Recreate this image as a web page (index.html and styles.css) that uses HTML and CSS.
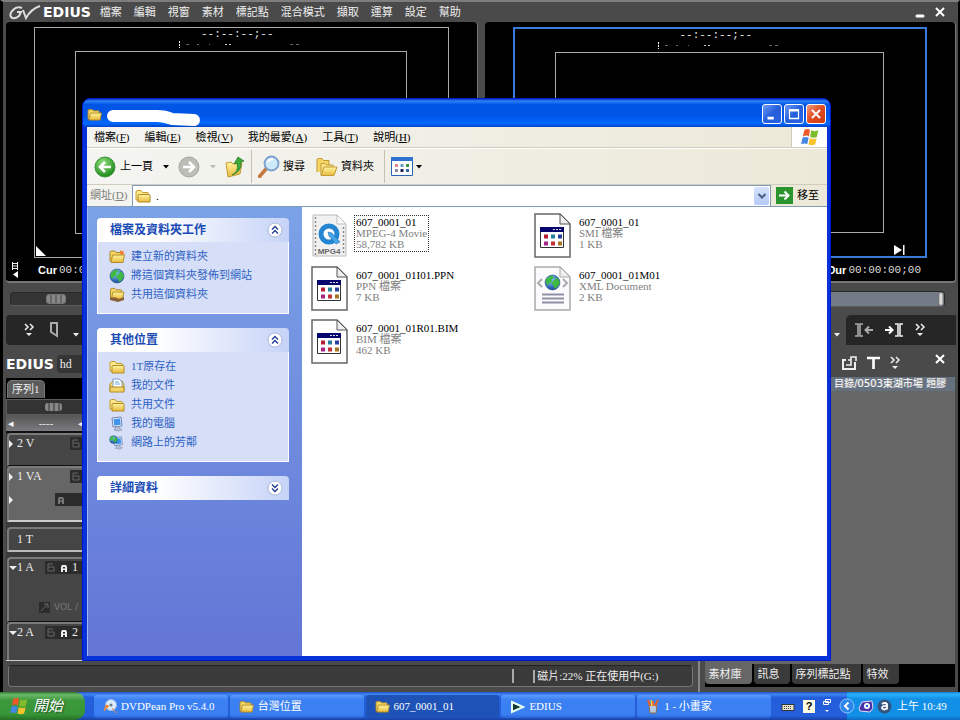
FILE: index.html
```
<!DOCTYPE html>
<html lang="zh-Hant">
<head>
    <meta charset="utf-8">
    <title>EDIUS</title>
    <link rel="stylesheet" href="styles.css">
</head>
<body>
    <svg class="sprite" width="0" height="0" aria-hidden="true">
        <defs>
            <linearGradient id="gold" x1="0" y1="0" x2="0" y2="1">
                <stop offset="0" stop-color="#fff4a0"/>
                <stop offset="1" stop-color="#e9b93a"/>
            </linearGradient>
            <radialGradient id="green" cx="0.4" cy="0.3" r="0.7">
                <stop offset="0" stop-color="#8fe07c"/>
                <stop offset="1" stop-color="#1f8a1c"/>
            </radialGradient>
            <radialGradient id="earth" cx="0.4" cy="0.3" r="0.7">
                <stop offset="0" stop-color="#8fd0f5"/>
                <stop offset="1" stop-color="#1448a0"/>
            </radialGradient>
        </defs>
        <symbol id="folder" viewBox="0 0 16 14">
            <path d="M1 12V3q0-1.500 1.500-1.500h3L7 3h5q1 0 1 1v2" fill="#f5d663" stroke="#a8832a"/>
            <path d="M2 13 3.500 5.500h12L14 13z" fill="url(#gold)" stroke="#b08a25"/>
        </symbol>
        <symbol id="folder-side" viewBox="0 0 16 14">
            <path d="M1 11V3q0-1.500 1.500-1.500h3.500l1.500 2H12q1.500 0 1.500 1.500v6z" fill="#ffe98a" stroke="#c39b33"/>
            <path d="M3 13V6.500q0-1 1-1h10q1 0 1 1V13z" fill="url(#gold)" stroke="#b08a25"/>
        </symbol>
        <symbol id="globe" viewBox="0 0 16 16">
            <circle cx="8" cy="8" r="7" fill="url(#earth)" stroke="#27508b" stroke-width="0.600"/>
            <path d="M2 5q2-3 6-3.500l1 2-2 2 .5 2-3 1.500-1.500 2Q.8 8 2 5zM10 3l3.500 1.500L15 8l-2 4-3 2-1-3-2-2 2-3 2-.5z" fill="#3fb944"/>
        </symbol>
        <symbol id="monitor" viewBox="0 0 16 16">
            <path d="M3 2l9-1 1 9-9 1z" fill="#e8eefb" stroke="#7486b5"/>
            <path d="M4.500 3.200l6.500-.7.700 6.300-6.500.7z" fill="#3f95ec"/>
            <path d="M6 11l4-.5.5 2 2.500 1-3 1.500-5-1 1.500-1z" fill="#b9c2d8" stroke="#7a84a0" stroke-width="0.600"/>
        </symbol>
        <symbol id="flag" viewBox="0 0 18 16">
            <path d="M4 1.500q3-1.500 5 0L8 7.500q-2-1.500-5.500 0z" fill="#ec5a2a"/>
            <path d="M10 2q3 1.500 6.500 0l-1.400 6q-3 1.300-6-.2z" fill="#80bd2c"/>
            <path d="M2.300 8.500q3-1.300 5.500.2l-1.300 5.800q-2.500-1.500-5.500 0z" fill="#4486e4"/>
            <path d="M8.800 9q3 1.500 6.200.2l-1.400 5.600q-3 1.400-6 0z" fill="#fac22d"/>
        </symbol>
        <symbol id="chevrons" viewBox="0 0 12 16">
            <path d="M2 2l3 3-3 3M7 2l3 3-3 3" fill="none" stroke="#eee" stroke-width="1.500"/>
            <path d="M3 11h6l-3 3z" fill="#eee"/>
        </symbol>
        <symbol id="caret" viewBox="0 0 6 4"><path d="M0 0h6L3 3.500z" fill="currentColor"/></symbol>
        <symbol id="lock" viewBox="0 0 9 9">
            <path d="M1 4h6v4H1zM1 4V1h5" fill="none" stroke="#666"/>
        </symbol>
        <symbol id="speaker" viewBox="0 0 8 8">
            <path d="M1 8V3l1-2h4l1 2v5H5V6H3v2zM3 3v1.500h2V3z" fill="currentColor" fill-rule="evenodd"/>
        </symbol>
        <symbol id="toggle-up" viewBox="0 0 18 18">
            <circle cx="9" cy="9" r="7" fill="#fff" stroke="#a9b5da"/>
            <path d="M6 8.500 9 5.500l3 3M6 12.500 9 9.500l3 3" fill="none" stroke="#223c94" stroke-width="1.400"/>
        </symbol>
        <symbol id="toggle-down" viewBox="0 0 18 18">
            <circle cx="9" cy="9" r="7" fill="#fff" stroke="#a9b5da"/>
            <path d="M6 5.500l3 3 3-3M6 9.500l3 3 3-3" fill="none" stroke="#223c94" stroke-width="1.400"/>
        </symbol>
        <symbol id="dots" viewBox="0 0 124 8">
            <path d="M1.500 1v7" stroke="#fff" stroke-dasharray="2 1"/>
            <path d="M8 4.500h3M19 4.500h2M31 4.500h1M112 4.500h3M118 4.500h3" stroke="#666"/>
            <path d="M47 4.500h2M51 4.500h2" stroke="#ccc"/>
        </symbol>
        <symbol id="file-app" viewBox="0 0 37 45">
            <path d="M1 1h25l10 10v33H1z" fill="#fff" stroke="#666" stroke-width="1.500"/>
            <path d="M26 1v10h10z" fill="#eee" stroke="#555"/>
            <path d="M6.500 14.500h23v20h-23z" fill="#fff" stroke="#333"/>
            <path d="M6 14h24v5H6z" fill="#06066e"/>
            <path d="M19 16.500h2M22 16.500h2M25 16.500h2" stroke="#ddd"/>
            <path d="M10 21.500h4v4h-4z" fill="#b52036"/>
            <path d="M17 21.500h4v4h-4z" fill="#267f9e"/>
            <path d="M24 21.500h4v4h-4z" fill="#28419e"/>
            <path d="M10 28.500h4v4h-4z" fill="#a42588"/>
            <path d="M17 28.500h4v4h-4z" fill="#c33038"/>
            <path d="M24 28.500h4v4h-4z" fill="#a47420"/>
        </symbol>
    </svg>

    <main class="edius">
        <header class="edius-bar">
            <svg class="gv-logo" viewBox="0 0 32 15">
                <path d="M13 3Q8 1 4 5t-2 7q3 3 8-1l2-4H8" fill="none" stroke="#ddd" stroke-width="2"/>
                <path d="M14 5l3 8Q22 4 31 1" fill="none" stroke="#ddd" stroke-width="2"/>
            </svg>
            <span class="brand">EDIUS</span>
            <nav class="edius-menu">
                <a href="#">檔案</a><a href="#">編輯</a><a href="#">視窗</a><a href="#">素材</a><a href="#">標記點</a><a href="#">混合模式</a><a href="#">擷取</a><a href="#">運算</a><a href="#">設定</a><a href="#">幫助</a>
            </nav>
            <div class="edius-controls">
                <button aria-label="最小化"><svg viewBox="0 0 12 12" width="12" height="12"><path d="M3 10h6" stroke="#fff" stroke-width="3" stroke-linecap="round"/></svg></button>
                <button aria-label="關閉"><svg viewBox="0 0 12 12" width="12" height="12"><path d="M2 2l8 8M10 2l-8 8" stroke="#fff" stroke-width="2"/></svg></button>
            </div>
        </header>

        <section class="monitors">
            <div class="monitor">
                <div class="frame">
                    <div class="frame-info"><span>--:--:--;--</span><svg width="124" height="8"><use href="#dots"/></svg></div>
                    <div class="safe-area"></div>
                    <div class="frame-marks"><svg width="10" height="10" viewBox="0 0 10 10"><path d="M0 0l10 10H0z" fill="#fff"/></svg></div>
                </div>
                <div class="timecodes">
                    <svg width="10" height="18" viewBox="0 0 10 18"><path d="M2.500 1v8M7.500 1v8M2 2.500h6M2 5h6M2 7.500h6" stroke="#eee"/><path d="M8 10v7l-5-3.500z" fill="#fff"/></svg>
                    <b>Cur</b><span>00:00:00;00</span>
                </div>
            </div>
            <div class="monitor">
                <div class="frame frame-active">
                    <div class="frame-info"><span>--:--:--;--</span><svg width="124" height="8"><use href="#dots"/></svg></div>
                    <div class="safe-area"></div>
                    <div class="frame-marks marks-end"><svg width="11" height="10" viewBox="0 0 11 10"><path d="M0 0l8 5-8 5zM9 0h1.500v10H9z" fill="#fff"/></svg></div>
                </div>
                <div class="timecodes timecodes-end"><b>Dur</b><span>00:00:00;00</span></div>
            </div>
        </section>

        <section class="scrubbers">
            <div><input type="range" aria-label="播放位置" value="8"></div>
            <div><input type="range" class="scrub-full" aria-label="錄製位置" value="100"></div>
        </section>

        <section class="transport">
            <div class="transport-group">
                <button aria-label="更多"><svg width="12" height="16"><use href="#chevrons"/></svg></button>
                <button aria-label="標記"><svg width="10" height="16" viewBox="0 0 10 16"><path d="M2 1h6v13l-6-4z" fill="none" stroke="#aaa" stroke-width="2"/></svg></button>
                <button class="low" aria-label="選項"><svg width="6" height="4"><use href="#caret"/></svg></button>
            </div>
            <div class="transport-group transport-end">
                <button class="low" aria-label="選項"><svg width="6" height="4"><use href="#caret"/></svg></button>
                <div class="transport-dark">
                    <button aria-label="入點"><svg width="20" height="16" viewBox="0 0 20 16"><path d="M1 2h3v12H1M9 2H6v12h3" fill="none" stroke="#aaa" stroke-width="1.600"/><path d="M19 8h-7M15 4.500 11.500 8l3.500 3.500" fill="none" stroke="#aaa" stroke-width="2"/></svg></button>
                    <button aria-label="出點"><svg width="20" height="16" viewBox="0 0 20 16"><path d="M11 2h3v12h-3M19 2h-3v12h3" fill="none" stroke="#eee" stroke-width="1.600"/><path d="M1 8h7M5 4.500 8.500 8 5 11.500" fill="none" stroke="#fff" stroke-width="2"/></svg></button>
                    <button aria-label="更多"><svg width="12" height="16"><use href="#chevrons"/></svg></button>
                </div>
            </div>
        </section>

        <section class="lower">
            <div class="timeline">
                <header class="timeline-bar"><span class="brand">EDIUS</span><span class="project">hd</span></header>
                <div class="sequence-tabs"><button>序列1</button></div>
                <div class="ruler"><span class="thumb"></span></div>
                <div class="scale"><span>◂</span><span>----</span><span>◂</span></div>
                <div class="tracks">
                    <div class="track track-v"><i class="arrow-right"></i><span>2 V</span><span class="badge"><svg width="9" height="9"><use href="#lock"/></svg></span></div>
                    <div class="track track-va">
                        <i class="arrow-right"></i><span>1 VA</span><span class="badge"><svg width="9" height="9"><use href="#lock"/></svg></span>
                        <i class="arrow-right"></i><span class="badge badge-audio"><svg width="8" height="8"><use href="#speaker"/></svg></span>
                    </div>
                    <div class="track track-t"><i></i><span>1 T</span></div>
                    <div class="track track-a">
                        <i class="arrow-down"></i><span>1 A</span><span class="badge"><svg width="9" height="9"><use href="#lock"/></svg><svg width="8" height="8"><use href="#speaker"/></svg><b>1</b></span>
                        <span class="volume"><svg width="11" height="11" viewBox="0 0 11 11"><path d="M0 0h11v11H0z" fill="#2c2c2c"/><path d="M2 9l7-7M5 2h4v4" stroke="#666" fill="none"/></svg>VOL /</span>
                    </div>
                    <div class="track track-a2"><i class="arrow-down"></i><span>2 A</span><span class="badge"><svg width="9" height="9"><use href="#lock"/></svg><svg width="8" height="8"><use href="#speaker"/></svg><b>2</b></span></div>
                </div>
                <footer class="status"><span class="status-mark"></span><span class="status-text">磁片:22% 正在使用中(G:)</span></footer>
            </div>

            <div class="bin">
                <header class="bin-bar">
                    <button aria-label="加入素材"><svg width="17" height="16" viewBox="0 0 17 16"><path d="M5 5H2v9h12V7" fill="none" stroke="#eee" stroke-width="2"/><path d="M5 10h5V5M7 5h3V2h5v4" fill="none" stroke="#eee" stroke-width="1.600"/></svg></button>
                    <button aria-label="字幕"><svg width="13" height="14" viewBox="0 0 13 14"><path d="M0 2h13M6.500 2v11" stroke="#fff" stroke-width="2.600"/></svg></button>
                    <button aria-label="更多"><svg width="12" height="16"><use href="#chevrons"/></svg></button>
                    <button class="bin-close" aria-label="關閉"><svg viewBox="0 0 12 12" width="12" height="12"><path d="M2 2l8 8M10 2l-8 8" stroke="#fff" stroke-width="2"/></svg></button>
                </header>
                <div class="bin-path">目錄/0503東湖市場 題膠</div>
                <div class="bin-body"></div>
                <nav class="bin-tabs"><button class="active">素材庫</button><button>訊息</button><button>序列標記點</button><button>特效</button></nav>
            </div>
        </section>
    </main>

    <section class="explorer">
        <header class="title-bar">
            <svg width="15" height="13"><use href="#folder"/></svg>
            <svg class="scribble" width="96" height="18" viewBox="0 0 96 18"><path d="M8 7h44q8 0 15 3l22 1" fill="none" stroke="#fff" stroke-width="12" stroke-linecap="round" stroke-linejoin="round"/></svg>
            <div class="window-controls">
                <button aria-label="最小化"><svg viewBox="0 0 20 20"><path d="M5 14.500h7" stroke="#fff" stroke-width="3"/></svg></button>
                <button aria-label="最大化"><svg viewBox="0 0 20 20"><path d="M5 5.500h10V15H5z" fill="none" stroke="#fff" stroke-width="1.400"/><path d="M4.500 6h11" stroke="#fff" stroke-width="2.400"/></svg></button>
                <button class="close" aria-label="關閉"><svg viewBox="0 0 20 20"><path d="M5.500 5.500l9 9M14.500 5.500l-9 9" stroke="#fff" stroke-width="2.200"/></svg></button>
            </div>
        </header>
        <nav class="menu-bar">
            <a href="#">檔案(<u>F</u>)</a><a href="#">編輯(<u>E</u>)</a><a href="#">檢視(<u>V</u>)</a><a href="#">我的最愛(<u>A</u>)</a><a href="#">工具(<u>T</u>)</a><a href="#">說明(<u>H</u>)</a>
            <span class="flag-box"><svg width="20" height="18"><use href="#flag"/></svg></span>
        </nav>
        <div class="tool-bar">
            <button class="tool-back"><svg width="22" height="22" viewBox="0 0 22 22"><circle cx="11" cy="11" r="10" fill="url(#green)" stroke="#3a9436"/><path d="M17 11H7M11 6l-5 5 5 5" fill="none" stroke="#fff" stroke-width="2.600"/></svg>上一頁</button>
            <button class="tool-caret" aria-label="上一頁清單"><svg width="6" height="4"><use href="#caret"/></svg></button>
            <button aria-label="下一頁"><svg width="22" height="22" viewBox="0 0 22 22"><circle cx="11" cy="11" r="10" fill="#bdbdb8" stroke="#a5a5a0"/><path d="M5 11h10M11 6l5 5-5 5" fill="none" stroke="#fff" stroke-width="2.600"/></svg></button>
            <button class="tool-caret faded" aria-label="下一頁清單"><svg width="6" height="4"><use href="#caret"/></svg></button>
            <button aria-label="上一層"><svg width="20" height="22" viewBox="0 0 20 22"><path d="M1 7l5-1 2 2 9-1-2 11-12 3z" fill="url(#gold)" stroke="#c19a34"/><path d="M7 19q7-3 5-12l-3 1 4-7 6 4-3 1q1 10-9 13z" fill="#3fa83b" stroke="#237523" stroke-width="0.700"/></svg></button>
            <span class="divider"></span>
            <button><svg width="22" height="23" viewBox="0 0 22 23"><path d="M1.500 21.500 8 14" stroke="#c8793f" stroke-width="3.500" stroke-linecap="round"/><circle cx="13.500" cy="8.500" r="7" fill="#cdeafb" stroke="#7d9fcf" stroke-width="1.800"/><path d="M10 7q1-3 5-3" fill="none" stroke="#fff" stroke-width="2"/></svg>搜尋</button>
            <button class="tool-folders"><svg width="22" height="20" viewBox="0 0 22 20"><path d="M1 15V3q0-1.500 1.500-1.500H6l1.500 2H13v10" fill="#f5d663" stroke="#c19a34"/><path d="M5 18V6.500h4L10.500 8H17v3" fill="#fbe387" stroke="#c19a34"/><path d="M5 18.500 8 10h13l-3 8.500z" fill="url(#gold)" stroke="#c19a34"/></svg>資料夾</button>
            <span class="divider"></span>
            <button class="tool-view" aria-label="檢視"><svg width="22" height="19" viewBox="0 0 22 19"><path d="M.5.5h21v18H.5z" fill="#fff" stroke="#2a64b5"/><path d="M0 0h22v4H0z" fill="#2f71d0"/><path d="M4 7h3v3H4z" fill="#d88"/><path d="M9.500 7h3v3h-3z" fill="#69c"/><path d="M15 7h3v3h-3z" fill="#3a953a"/><path d="M4 12h3v3H4z" fill="#88a"/><path d="M9.500 12h3v3h-3z" fill="#225"/><path d="M15 12h3v3h-3z" fill="#36a"/></svg><svg width="6" height="4"><use href="#caret"/></svg></button>
        </div>
        <form class="address-bar">
            <label for="address">網址(<u>D</u>)</label>
            <div class="address-box">
                <svg width="16" height="14"><use href="#folder-side"/></svg>
                <input type="text" id="address" value=".">
                <button type="button" aria-label="網址清單"><svg width="10" height="7" viewBox="0 0 10 7"><path d="M1.500 1 5 4.500 8.500 1" fill="none" stroke="#4d6185" stroke-width="2.200"/></svg></button>
            </div>
            <button type="button" class="go"><svg width="17" height="17" viewBox="0 0 17 17"><path d="M0 0h17v17H0z" fill="#2c942c"/><path d="M3 8.500h9M8.500 4.500l4 4-4 4" fill="none" stroke="#fff" stroke-width="2"/></svg>移至</button>
        </form>

        <div class="explorer-body">
            <aside class="sidebar">
                <section class="panel">
                    <h2>檔案及資料夾工作<button aria-label="收合"><svg width="18" height="18"><use href="#toggle-up"/></svg></button></h2>
                    <ul>
                        <li><svg width="16" height="15" viewBox="0 0 16 14"><use href="#folder" width="16" height="14"/><path d="M11 0l1 2 3-1-1 2 2 1-3 1-2-1z" fill="#f47a2a"/></svg><a href="#">建立新的資料夾</a></li>
                        <li><svg width="16" height="16"><use href="#globe"/></svg><a href="#">將這個資料夾發佈到網站</a></li>
                        <li><svg width="16" height="15" viewBox="0 0 16 15"><use href="#folder" width="16" height="13"/><path d="M1 11q5-2 9 1l5-2v3l-6 2-8-2z" fill="#8a6038"/></svg><a href="#">共用這個資料夾</a></li>
                    </ul>
                </section>
                <section class="panel">
                    <h2>其他位置<button aria-label="收合"><svg width="18" height="18"><use href="#toggle-up"/></svg></button></h2>
                    <ul>
                        <li><svg width="16" height="14"><use href="#folder-side"/></svg><a href="#">1T原存在</a></li>
                        <li><svg width="16" height="15" viewBox="0 0 16 15"><path d="M1 13V6l3-3h9l2 4v6z" fill="url(#gold)" stroke="#b08a25"/><path d="M4 1h6l3 3v6H4z" fill="#fff" stroke="#7f9cc0"/><path d="M6 4h4M6 6h5" stroke="#6aa6d8"/><path d="M1 9h14v5H1z" fill="#f3d568" stroke="#b08a25"/></svg><a href="#">我的文件</a></li>
                        <li><svg width="16" height="14"><use href="#folder-side"/></svg><a href="#">共用文件</a></li>
                        <li><svg width="16" height="16"><use href="#monitor"/></svg><a href="#">我的電腦</a></li>
                        <li><svg width="16" height="16" viewBox="0 0 16 16"><use href="#monitor" x="2" width="14" height="16"/><use href="#globe" width="9" height="9"/></svg><a href="#">網路上的芳鄰</a></li>
                    </ul>
                </section>
                <section class="panel">
                    <h2>詳細資料<button aria-label="展開"><svg width="18" height="18"><use href="#toggle-down"/></svg></button></h2>
                </section>
            </aside>
            <div class="files">
                <div class="file">
                    <svg width="37" height="45" viewBox="0 0 37 45">
                        <path d="M2 2h24l9 9v32H2z" fill="#f1f1f1" stroke="#bbb"/>
                        <path d="M26 2v9h9z" fill="#fff" stroke="#bbb"/>
                        <path d="M4.500 4v38M32.500 14v28" stroke="#888" stroke-width="1.500" stroke-dasharray="2 2"/>
                        <circle cx="18" cy="21" r="8" fill="#fff" stroke="#2486d2" stroke-width="5"/>
                        <path d="M17 19l4 1 8 9-4 2-7-8z" fill="#45a5e8" stroke="#1b71b8" stroke-width="0.600"/>
                        <text x="18" y="41" text-anchor="middle" class="mpg-label">MPG4</text>
                    </svg>
                    <p class="selected"><strong>607_0001_01</strong>MPEG-4 Movie<br>58,782 KB</p>
                </div>
                <div class="file"><svg width="37" height="45"><use href="#file-app"/></svg><p><strong>607_0001_01</strong>SMI 檔案<br>1 KB</p></div>
                <div class="file"><svg width="37" height="45"><use href="#file-app"/></svg><p><strong>607_0001_01I01.PPN</strong>PPN 檔案<br>7 KB</p></div>
                <div class="file">
                    <svg width="37" height="45" viewBox="0 0 37 45">
                        <path d="M1 1h25l10 10v33H1z" fill="#fbfbfd" stroke="#aaa" stroke-width="1.500"/>
                        <path d="M26 1v10h10z" fill="#eee" stroke="#aaa"/>
                        <path d="M8 13l-4 4 4 4M29 13l4 4-4 4" fill="none" stroke="#aaa" stroke-width="2"/>
                        <use href="#globe" x="10" y="8" width="17" height="17"/>
                        <path d="M8 28.500h22M8 32.500h22M8 36.500h22" stroke="#8f8fa6" stroke-width="2"/>
                    </svg>
                    <p><strong>607_0001_01M01</strong>XML Document<br>2 KB</p>
                </div>
                <div class="file"><svg width="37" height="45"><use href="#file-app"/></svg><p><strong>607_0001_01R01.BIM</strong>BIM 檔案<br>462 KB</p></div>
            </div>
        </div>
    </section>

    <footer class="taskbar">
        <button class="start"><svg width="20" height="18"><use href="#flag"/></svg>開始</button>
        <div class="tasks">
            <button><svg width="14" height="15" viewBox="0 0 14 15"><circle cx="8" cy="6" r="5.500" fill="#dcecff" stroke="#9ab8e8"/><path d="M6 7 1 12l2-6zM9 9l4 5" fill="#f08a3c" stroke="#f08a3c"/><circle cx="8" cy="6" r="1.500" fill="#678"/></svg>DVDPean Pro v5.4.0</button>
            <button><svg width="15" height="13"><use href="#folder"/></svg>台灣位置</button>
            <button class="current"><svg width="15" height="13"><use href="#folder"/></svg>607_0001_01</button>
            <button><svg width="15" height="14" viewBox="0 0 15 14"><path d="M2 2l11 5-11 5z" fill="#123a34" stroke="#e6fff0" stroke-width="2"/></svg>EDIUS</button>
            <button><svg width="14" height="15" viewBox="0 0 14 15"><path d="M3 6h8l-1 8H4z" fill="#b8cbe0" stroke="#8c6b54"/><path d="M4 7 2 1M7 7V2M9 7l3-6" stroke="#e4622c" stroke-width="2"/><path d="M6 7 5 1" stroke="#f1d04c" stroke-width="1.500"/></svg>1 - 小畫家</button>
        </div>
        <div class="language-bar">
            <button aria-label="鍵盤"><svg width="14" height="14" viewBox="0 0 14 14"><path d="M1 5.500h12v6H1z" fill="#e8e4cc" stroke="#333"/><path d="M3 7.500h8M3 9.500h8" stroke="#444" stroke-dasharray="1 1"/></svg></button>
            <button class="help">?</button>
            <button aria-label="還原"><svg width="8" height="16" viewBox="0 0 8 16"><path d="M2.500 1.500h5v3h-5zM.5 3.500h5v3h-5z" fill="#2c61d8" stroke="#fff"/><path d="M2 12h4l-2 2z" fill="#fff"/></svg></button>
        </div>
        <div class="tray">
            <button class="tray-toggle" aria-label="顯示圖示"><svg width="16" height="16" viewBox="0 0 16 16"><circle cx="8" cy="8" r="7" fill="#2c85ea" stroke="#8cc6ff"/><path d="M9.500 4.500 6 8l3.500 3.500" fill="none" stroke="#fff" stroke-width="2"/></svg></button>
            <svg width="16" height="14" viewBox="0 0 16 14"><path d="M1 9 4 3l10-1 1 7-3 4-10-1z" fill="#4634a8" stroke="#e8d6f4"/><circle cx="9" cy="7" r="3" fill="#fff"/><circle cx="9" cy="7" r="1.300" fill="#36c"/></svg>
            <svg width="15" height="15" viewBox="0 0 15 15"><circle cx="7.500" cy="7.500" r="7" fill="#34557f"/><path d="M5 5q3-2 5 0v5.500M10 7q-5-.5-5 2 2 3 5 0" fill="none" stroke="#fff" stroke-width="1.800"/></svg>
            <time>上午 10:49</time>
        </div>
    </footer>
</body>
</html>
```
FILE: styles.css
```
* {
    box-sizing: border-box;
}
body {
    margin: 0;
    height: 100vh;
    display: flex;
    flex-direction: column;
    overflow: hidden;
    background: #000;
    color: #eee;
    font: 11px/13px "Liberation Serif", "Noto Sans CJK TC", serif;
}
button {
    display: flex;
    align-items: center;
    padding: 0;
    border: 0;
    background: none;
    color: inherit;
    font: inherit;
    white-space: nowrap;
}
a {
    color: inherit;
    text-decoration: none;
    white-space: nowrap;
}
svg {
    display: block;
    flex: none;
}
.sprite {
    position: absolute;
}

/* EDIUS */
.edius {
    flex: 1;
    min-height: 0;
    display: flex;
    flex-direction: column;
    padding: 0 2px 0 3px;
    background: #4a4a4a;
    border-top: 2px solid #7d7d7d;
    border-left: 3px solid #000;
    border-right: 2px solid #000;
}
.edius-bar {
    display: flex;
    align-items: center;
    height: 20px;
    flex: none;
    padding: 0 10px 0 3px;
}
.gv-logo {
    width: 32px;
    height: 15px;
}
.brand {
    font: bold 14px/18px "DejaVu Sans", sans-serif;
    color: #fff;
}
.edius-bar .brand {
    margin: 0 9px 0 2px;
}
.edius-menu {
    display: flex;
    gap: 12px;
}
.edius-controls {
    display: flex;
    gap: 8px;
    margin-left: auto;
}
.monitors {
    display: flex;
    gap: 7px;
    flex: 261;
    min-height: 0;
}
.monitor {
    flex: 1;
    display: flex;
    flex-direction: column;
    padding: 5px 28px 0 28px;
    background: #000;
    border-right: 1px solid #777;
    border-bottom: 2px solid #777;
    border-radius: 4px;
}
.frame {
    flex: 1;
    display: flex;
    flex-direction: column;
    border: 1px solid #aaa;
}
.frame-active {
    border: 2px solid #3a7ad8;
}
.frame-info {
    display: flex;
    flex-direction: column;
    align-items: center;
    height: 23px;
    padding-right: 8px;
    font: 11px/12px "Liberation Mono", monospace;
}
.frame-info svg {
    margin-left: 6px;
}
.safe-area {
    flex: 1;
    margin: 0 41px 0 40px;
    border: 1px solid #aaa;
}
.frame-marks {
    display: flex;
    align-items: flex-end;
    height: 23px;
    padding: 1px;
}
.marks-end {
    justify-content: flex-end;
    padding-right: 20px;
}
.timecodes {
    display: flex;
    align-items: center;
    height: 23px;
    margin-left: -24px;
    color: #ddd;
    font: 11px/14px "Liberation Mono", monospace;
}
.timecodes b {
    margin: 0 2px 0 18px;
    color: #fff;
    font: bold 11px/14px "Liberation Sans", sans-serif;
}
.timecodes-end {
    justify-content: flex-end;
    padding-right: 6px;
}
.scrubbers {
    display: flex;
    gap: 7px;
    height: 32px;
    flex: none;
}
.scrubbers div {
    flex: 1;
    display: flex;
    align-items: center;
    padding: 0 11px 0 4px;
}
.scrubbers input {
    appearance: none;
    width: 100%;
    height: 14px;
    margin: 0;
    background: #353535;
    border: 1px solid #2a2a2a;
    border-bottom-color: #5c5c5c;
    border-radius: 4px;
}
.scrubbers input::-webkit-slider-thumb {
    appearance: none;
    width: 20px;
    height: 10px;
    border-radius: 3px;
    border: 1px solid #777;
    background: repeating-linear-gradient(90deg, #888 0 3px, #666 3px 5px);
}
.scrubbers .scrub-full {
    height: 16px;
    background: #737b87;
}
.scrubbers .scrub-full::-webkit-slider-thumb {
    width: 6px;
    height: 14px;
    background: linear-gradient(90deg, #aaa, #eee, #999);
}
.transport {
    display: flex;
    height: 30px;
    flex: none;
    background: #262626;
    border-radius: 4px;
}
.transport-group {
    display: flex;
    align-items: center;
    gap: 14px;
    padding-left: 17px;
}
.low {
    align-self: flex-end;
    padding-bottom: 8px;
}
.transport-end {
    margin-left: auto;
    gap: 6px;
    background: #4a4a4a;
}
.transport-dark {
    display: flex;
    align-items: center;
    gap: 10px;
    align-self: stretch;
    padding: 0 30px 0 8px;
    background: #262626;
    border-radius: 5px 0 0 0;
}
.lower {
    display: flex;
    flex: 347;
    min-height: 0;
}
.timeline {
    flex: 1;
    display: flex;
    flex-direction: column;
    border-right: 2px solid #888;
}
.timeline-bar {
    display: flex;
    align-items: center;
    height: 33px;
    padding-top: 4px;
    flex: none;
}
.project {
    flex: 1;
    height: 18px;
    margin-left: 3px;
    padding: 2px 3px;
    background: #353535;
    border-radius: 4px;
    font-size: 12px;
    line-height: 14px;
}
.sequence-tabs {
    height: 21px;
    padding: 2px 0 0 1px;
    background: #000;
    flex: none;
}
.sequence-tabs button {
    height: 18px;
    padding: 0 4px;
    background: #5c5c5c;
    border: 1px solid #777;
    border-bottom: 0;
    border-radius: 5px 5px 0 0;
}
.ruler {
    height: 16px;
    padding: 3px 0 0 38px;
    background: #333;
    border: 1px solid #5c5c5c;
    flex: none;
}
.thumb {
    display: block;
    width: 17px;
    height: 8px;
    border-radius: 3px;
    background: repeating-linear-gradient(90deg, #888 0 3px, #5c5c5c 3px 5px);
}
.scale {
    display: flex;
    justify-content: space-between;
    width: 80px;
    height: 18px;
    padding: 2px;
    background: linear-gradient(#555, #7b7b80);
    border-bottom: 2px solid #111;
    flex: none;
}
.tracks {
    flex: 1;
    min-height: 0;
    padding-left: 1px;
    background: #3a3a3a;
    border-bottom: 1px solid #ccc;
    overflow: hidden;
}
.track {
    display: grid;
    grid-template-columns: 8px 53px 1fr;
    align-content: start;
    padding: 2px 0 0;
    background: #454545;
    border-top: 2px solid #7b7b7b;
    border-left: 2px solid #7b7b7b;
    border-bottom: 1px solid #111;
    border-radius: 4px 0 0 0;
    font-size: 12px;
}
.track-v {
    height: 33px;
}
.track-va {
    height: 56px;
    row-gap: 10px;
    background: #666;
    border-bottom: 2px solid #ccc;
}
.track-t {
    height: 25px;
    margin: 5px 0;
    padding-top: 4px;
    border-bottom: 2px solid #bbb;
}
.track-a,
.track-a2 {
    height: 65px;
    grid-template-columns: 8px 28px 1fr;
    row-gap: 27px;
}
.arrow-right,
.arrow-down {
    align-self: center;
    width: 0;
    height: 0;
    border: 4px solid transparent;
    border-left-color: #eee;
}
.arrow-down {
    border: 4px solid transparent;
    border-top-color: #eee;
    border-bottom: 0;
}
.badge {
    display: flex;
    align-items: center;
    gap: 4px;
    height: 13px;
    padding-left: 2px;
    background: #2c2c2c;
}
.badge b {
    font-weight: normal;
}
.badge-audio {
    grid-column: 2 / 4;
    margin-left: 38px;
    color: #777;
}
.volume {
    grid-column: 1 / 4;
    display: flex;
    align-items: center;
    gap: 4px;
    padding-left: 30px;
    color: #777;
    font: 9px/12px "DejaVu Sans", sans-serif;
}
.status {
    display: flex;
    justify-content: flex-end;
    align-items: center;
    height: 22px;
    margin: 4px 5px 5px 2px;
    padding-right: 33px;
    background: #3a3a3a;
    border: 1px solid #777;
    border-top-color: #222;
    border-radius: 4px;
    flex: none;
}
.status-mark {
    width: 21px;
    height: 14px;
    border-left: 2px solid #aaa;
}
.status-text {
    padding-left: 2px;
    border-left: 2px solid #aaa;
    white-space: nowrap;
}
.bin {
    flex: none;
    width: 27%;
    display: flex;
    flex-direction: column;
    padding: 0 1px 5px 5px;
}
.bin-bar {
    display: flex;
    align-items: center;
    justify-content: flex-end;
    gap: 9px;
    height: 32px;
    padding: 3px 9px 0 0;
}
.bin-close {
    margin: -8px 0 0 24px;
}
.bin-path {
    padding: 0 9px 1px 0;
    background: #66717f;
    color: #fff;
    font: 10px/13px "DejaVu Sans", "Noto Sans CJK TC", sans-serif;
    text-align: right;
    text-shadow: 1px 0 #999;
}
.bin-body {
    flex: 1;
    background: #666;
}
.bin-tabs {
    display: flex;
    gap: 2px;
    height: 23px;
    padding-bottom: 3px;
    background: #000;
}
.bin-tabs button {
    padding: 0 10px 0 4px;
    background: #3a3a3a;
    border-radius: 0 0 4px 4px;
}
.bin-tabs .active {
    background: #666;
}

/* folder window, floats over the editor */
.explorer {
    position: absolute;
    left: 82px;
    top: 98px;
    right: 129px;
    bottom: 59px;
    display: flex;
    flex-direction: column;
    padding: 0 3px 4px 4px;
    background: #0831d9;
    border: 1px solid #0019cf;
    border-radius: 8px 8px 0 0;
    color: #000;
    overflow: hidden;
}
.title-bar {
    display: flex;
    align-items: center;
    gap: 3px;
    height: 28px;
    flex: none;
    margin: 0 -3px 0 -4px;
    padding: 2px 4px 0 4px;
    background: linear-gradient(#0b3fc9, #2b80f8 8%, #0054e6 20%, #0054e6 60%, #0068ff 88%, #0243c4);
}
.scribble {
    align-self: flex-end;
}
.window-controls {
    display: flex;
    gap: 2px;
    margin-left: auto;
}
.window-controls button {
    width: 20px;
    height: 20px;
    border: 1px solid #fff;
    border-radius: 3px;
    background: linear-gradient(135deg, #6d9bf5, #245edb 50%, #2a64e4);
}
.window-controls .close {
    background: linear-gradient(135deg, #f0997c, #e04a20 50%, #cf3c12);
}
.menu-bar,
.tool-bar,
.address-bar {
    display: flex;
    align-items: center;
    flex: none;
    background: linear-gradient(90deg, #f4f4f1, #ece9d8);
}
.menu-bar {
    gap: 15px;
    height: 21px;
    padding-left: 7px;
    border-bottom: 1px solid #d0cdbf;
}
.flag-box {
    display: flex;
    justify-content: center;
    align-items: center;
    align-self: stretch;
    width: 36px;
    margin-left: auto;
    background: #fff;
    border-left: 1px solid #d0cdbf;
}
.tool-bar {
    height: 37px;
    padding-left: 7px;
    border-top: 1px solid #fff;
    border-bottom: 1px solid #d0cdbf;
}
.tool-bar button {
    gap: 3px;
}
.tool-bar .tool-caret {
    justify-content: center;
    width: 25px;
}
.faded {
    color: #bbb;
}
.divider {
    width: 1px;
    height: 33px;
    margin: 0 6px;
    background: #c5c2b2;
}
.tool-bar .tool-folders {
    margin: 0 4px 0 11px;
}
.tool-bar .tool-back {
    gap: 4px;
}
.address-bar {
    height: 22px;
    border-bottom: 1px solid #7f9db9;
}
.address-bar label {
    width: 45px;
    padding-left: 3px;
    color: #7d7d7a;
    white-space: nowrap;
}
.address-box {
    display: flex;
    align-items: center;
    align-self: stretch;
    flex: 1;
    padding: 1px 1px 1px 2px;
    background: #fff;
    border: 1px solid #7f9db9;
    border-bottom: 0;
}
.address-box input {
    flex: 1;
    min-width: 0;
    padding: 0 5px;
    border: 0;
    outline: 0;
    background: none;
    font: inherit;
}
.address-box button {
    justify-content: center;
    align-self: stretch;
    width: 15px;
    background: linear-gradient(#d7e3fe, #b6c9f6);
    border-radius: 2px;
}
.go {
    gap: 4px;
    padding: 0 8px 0 5px;
}
.explorer-body {
    display: flex;
    flex: 1;
    min-height: 0;
}
.sidebar {
    display: flex;
    flex-direction: column;
    gap: 14px;
    flex: none;
    width: 215px;
    padding: 11px 13px 0 9px;
    background: linear-gradient(#7ba2e7, #6375d6);
    border-left: 1px solid #9db9f0;
}
.panel h2 {
    display: flex;
    align-items: center;
    justify-content: space-between;
    height: 24px;
    margin: 0;
    padding: 0 5px 0 13px;
    background: linear-gradient(90deg, #fff 30%, #c6d3f7);
    border-radius: 4px 4px 0 0;
    color: #1a4bb5;
    font-size: 12px;
    line-height: 16px;
}
.panel ul {
    margin: 0;
    padding: 5px 0 9px 11px;
    list-style: none;
    background: #d6dff7;
    border: 1px solid #fff;
    border-top: 0;
}
.panel li {
    display: flex;
    align-items: center;
    gap: 6px;
    height: 19px;
    color: #2d5fc4;
}
.panel a {
    line-height: 17px;
}
.files {
    flex: 1;
    display: grid;
    grid-template-columns: repeat(auto-fill, 223px);
    align-content: start;
    row-gap: 8px;
    padding: 6px 9px;
    background: #fff;
}
.file {
    display: flex;
    gap: 7px;
}
.file p {
    align-self: start;
    margin: 3px 0 0;
    padding: 1px;
    color: #808080;
    line-height: 11px;
    white-space: nowrap;
}
.file .selected {
    outline: 1px dotted #333;
}
.file strong {
    display: block;
    color: #000;
    font-weight: normal;
}
.mpg-label {
    fill: #666;
    font: bold 8px "Liberation Sans", sans-serif;
}

/* taskbar */
.taskbar {
    display: flex;
    height: 28px;
    flex: none;
    background: linear-gradient(#1f4fc4, #4086f2 8%, #245edb 20%, #245edb 85%, #1941a5);
    color: #fff;
}
.start {
    gap: 4px;
    width: 85px;
    padding-left: 9px;
    background: linear-gradient(#2f7a2f, #6cb96a 10%, #3c983c 30%, #379537 80%, #256f25);
    border-radius: 0 10px 10px 0;
    font-size: 15px;
    font-style: italic;
    text-shadow: 1px 1px 1px #225522;
}
.tasks {
    display: flex;
    gap: 2px;
    flex: 1;
    padding: 3px 0 2px 9px;
}
.tasks button {
    flex: 1;
    gap: 4px;
    padding-left: 9px;
    background: linear-gradient(#5b9bfb, #3c81f3 20%, #3a7ff2 85%, #2a63d4);
    border-radius: 3px;
}
.tasks .current {
    background: #1e52b7;
}
.language-bar {
    display: flex;
    align-items: center;
    gap: 8px;
    padding: 0 16px 0 10px;
}
.language-bar .help {
    justify-content: center;
    width: 12px;
    height: 13px;
    background: #fffbe0;
    color: #000;
    font: bold 11px "Liberation Sans", sans-serif;
}
.tray {
    display: flex;
    align-items: center;
    gap: 3px;
    width: 113px;
    background: linear-gradient(#0f78d8, #2bb4f8 8%, #1290e8 25%, #1290e8 85%, #0e6cc0);
    white-space: nowrap;
}
.tray-toggle {
    margin-left: -8px;
}
.tray time {
    margin-left: 2px;
}
```
